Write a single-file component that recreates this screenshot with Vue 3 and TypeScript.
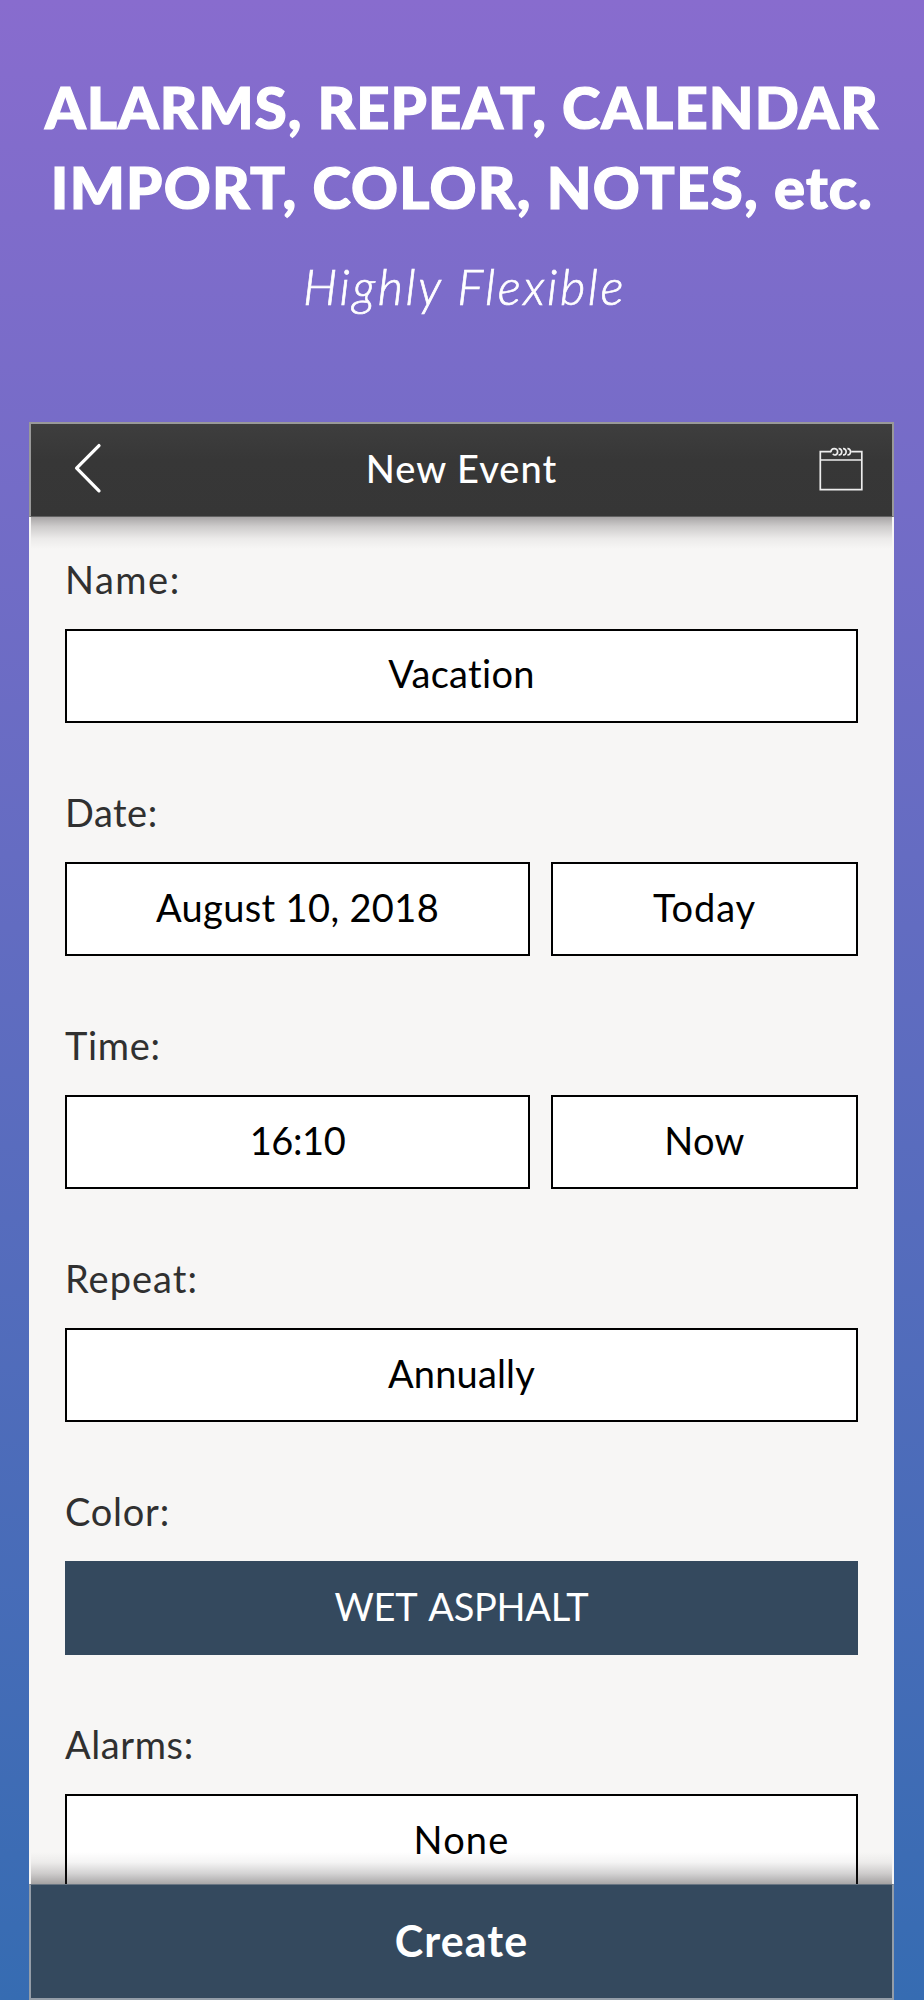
<script setup lang="ts">
interface Cell {
  text: string
  tracking: number
  kind?: 'color'
}

interface Field {
  label: string
  tracking: number
  cells: Cell[]
}

const fields: Field[] = [
  { label: 'Name:', tracking: 1.51, cells: [{ text: 'Vacation', tracking: 0.3 }] },
  {
    label: 'Date:',
    tracking: 0.5,
    cells: [
      { text: 'August 10, 2018', tracking: 0.35 },
      { text: 'Today', tracking: 0.9 },
    ],
  },
  {
    label: 'Time:',
    tracking: 0.7,
    cells: [
      { text: '16:10', tracking: -0.4 },
      { text: 'Now', tracking: 0.4 },
    ],
  },
  { label: 'Repeat:', tracking: 1.02, cells: [{ text: 'Annually', tracking: 0.18 }] },
  { label: 'Color:', tracking: 0.75, cells: [{ text: 'WET ASPHALT', tracking: -0.3, kind: 'color' }] },
  { label: 'Alarms:', tracking: 0.6, cells: [{ text: 'None', tracking: 1.16 }] },
]

const spacing = (px: number) => ({ letterSpacing: `${px}px` })
</script>

<template>
  <div class="page">
    <header class="hero">
      <h1 class="headline">
        <span class="line first">ALARMS, REPEAT, CALENDAR</span>
        <span class="line second">IMPORT, COLOR, NOTES, etc.</span>
      </h1>
      <p class="tagline">Highly Flexible</p>
    </header>

    <main class="screen">
      <nav class="navbar">
        <svg class="back" viewBox="0 0 30 52" width="30" height="52" aria-label="Back">
          <path d="M26 2.6 L3.6 25.2 L26 47.8" />
        </svg>
        <span class="title">New Event</span>
        <svg class="calendar" viewBox="0 0 46 46" width="46" height="46" aria-label="Calendar">
          <path d="M13 5.7 H2.3 V43.7 H43.8 V5.7 H33.2 M2.3 14 H43.8" />
          <path
            class="rings"
            d="M12.9 6.2 C13 1.4 19.6 1.4 19.6 5.8 C19.6 9.4 15.6 9.8 15.1 7.8
               M20.6 2.7 C24.8 2.4 24.8 9.3 20.6 8.9
               M25 2.7 C29.2 2.4 29.2 9.3 25 8.9
               M29.4 2.7 C33.6 2.4 33.6 9.3 29.4 8.9"
          />
        </svg>
      </nav>

      <section class="form">
        <div v-for="field in fields" :key="field.label" class="field">
          <div class="label" :style="spacing(field.tracking)">{{ field.label }}</div>
          <div class="cells" :class="{ split: field.cells.length > 1 }">
            <div v-for="cell in field.cells" :key="cell.text" class="cell" :class="cell.kind">
              <span :style="spacing(cell.tracking)">{{ cell.text }}</span>
            </div>
          </div>
        </div>
      </section>

      <footer class="create"><span>Create</span></footer>
    </main>
  </div>
</template>

<style>
body {
  margin: 0;
}
</style>

<style scoped>
.page {
  box-sizing: border-box;
  display: flex;
  flex-direction: column;
  width: 924px;
  height: 2000px;
  overflow: hidden;
  background: linear-gradient(#886cce, #366cb2);
  color: #fff;
  font-family: Lato, "Liberation Sans", sans-serif;
}

.hero {
  flex: none;
  box-sizing: border-box;
  height: 422px;
  padding-top: 67px;
  text-align: center;
}

.headline {
  margin: 0;
  font-size: 58px;
  font-weight: 900;
  line-height: 80px;
  -webkit-text-stroke: 1.2px #fff;
}

.line {
  display: block;
  white-space: nowrap;
}

.first {
  letter-spacing: 1.07px;
}

.second {
  letter-spacing: 1.25px;
}

.tagline {
  margin: 29px 0 0;
  padding-left: 5px;
  font-size: 49px;
  font-style: italic;
  font-weight: 300;
  line-height: 60px;
  letter-spacing: 2.5px;
  -webkit-text-stroke: 0.7px #fff;
}

.screen {
  flex: 1;
  display: flex;
  flex-direction: column;
  width: 865px;
  min-height: 0;
  margin-left: 29px;
  background: #f7f6f5;
}

.navbar {
  position: relative;
  flex: none;
  box-sizing: border-box;
  display: grid;
  grid-template-columns: 1fr auto 1fr;
  align-items: center;
  height: 95px;
  padding: 0 28px 3px 42px;
  border: 2px solid #999;
  border-bottom: 1px solid #616161;
  background: linear-gradient(#3e3e3e, #373737 40%, #363636);
}

.navbar::after {
  content: "";
  position: absolute;
  top: 100%;
  left: 0;
  right: 0;
  height: 32px;
  margin-top: 1px;
  background: linear-gradient(rgba(60, 55, 58, 0.42), rgba(60, 55, 58, 0.22) 30%, rgba(60, 55, 58, 0.06) 68%, rgba(60, 55, 58, 0));
}

.back,
.calendar {
  fill: none;
  stroke: #fff;
}

.back {
  stroke-width: 3.3;
  stroke-linecap: round;
  stroke-linejoin: round;
}

.calendar {
  justify-self: end;
  stroke: #ededed;
  stroke-width: 1.7;
}

.rings {
  stroke-width: 1.7;
}

.title {
  padding: 0 14px 1px 0;
  font-size: 38px;
  font-weight: 500;
  line-height: 46px;
  letter-spacing: 1px;
}

.form {
  flex: 1;
  min-height: 0;
  padding: 39px 36px 0;
  overflow: hidden;
  font-size: 38px;
}

.field {
  margin-bottom: 66px;
}

.label {
  margin-bottom: 27px;
  color: #303030;
  line-height: 46px;
}

.cells {
  display: grid;
  grid-template-columns: 1fr;
  gap: 21px;
}

.split {
  grid-template-columns: 465px 1fr;
}

.cell {
  box-sizing: border-box;
  display: flex;
  align-items: center;
  justify-content: center;
  height: 94px;
  padding-bottom: 4px;
  border: 2px solid #000;
  background: #fff;
  color: #000;
  line-height: 46px;
}

.field:first-child .cell {
  padding-bottom: 6px;
}

.cell.color {
  border-color: #34495e;
  background: #34495e;
  color: #fff;
  word-spacing: 4px;
}

.create {
  position: relative;
  flex: none;
  box-sizing: border-box;
  display: flex;
  align-items: center;
  justify-content: center;
  height: 116px;
  padding-bottom: 2px;
  border: 2px solid #949da8;
  border-top: 1px solid #687582;
  background: #34495e;
  font-size: 43px;
  font-weight: 700;
  line-height: 52px;
  letter-spacing: 1.1px;
}

.create::before {
  content: "";
  position: absolute;
  bottom: 100%;
  left: 0;
  right: 0;
  height: 32px;
  margin-bottom: 1px;
  background: linear-gradient(to top, rgba(40, 36, 38, 0.4), rgba(40, 36, 38, 0.2) 33%, rgba(40, 36, 38, 0.05) 68%, rgba(40, 36, 38, 0));
}
</style>
